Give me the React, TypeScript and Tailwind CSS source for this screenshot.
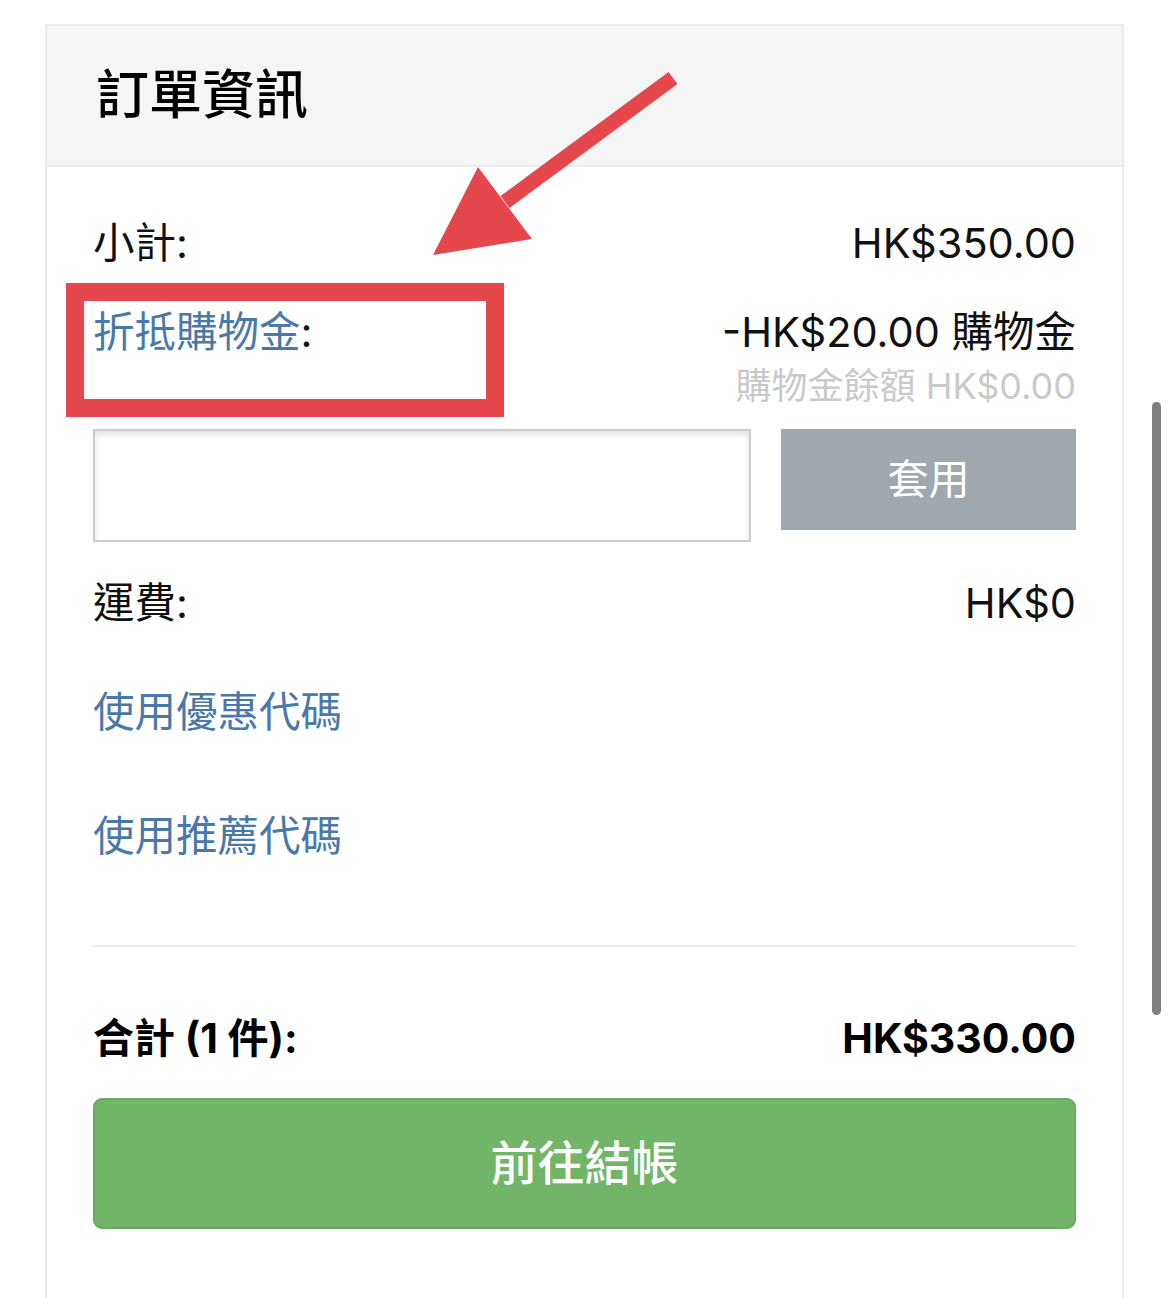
import React from 'react';

const font = { fontFamily: 'Inter, "Noto Sans CJK TC", sans-serif' };

const Row: React.FC<{ label: React.ReactNode; value: React.ReactNode; className?: string }> = ({ label, value, className }) => (
  <div className={`flex justify-between items-start ${className ?? ''}`}>
    <div className="text-[41.5px] leading-[48px] text-[#111]">{label}</div>
    <div className="text-[41.5px] leading-[48px] text-[#111] text-right">{value}</div>
  </div>
);

const App: React.FC = () => {
  return (
    <div className="relative w-[1169px] h-[1298px] bg-white overflow-hidden" style={font}>
      <div className="ml-[45px] mt-[24px] w-[1079px] h-[1274px] border-2 border-b-0 border-[#ebebeb]">
        <div className="h-[141px] bg-[#f5f5f5] border-b-2 border-[#ebebeb] flex items-center pl-[49px]">
          <h1 className="text-[53px] leading-none font-medium text-black">訂單資訊</h1>
        </div>

        <div className="px-[46px]">
          <Row className="mt-[52px]" label="小計:" value="HK$350.00" />

          <div className="flex justify-between items-start mt-[41px]">
            <div className="text-[41.5px] leading-[48px]">
              <span className="text-[#4a79a9]">折抵購物金</span>
              <span className="text-[#111]">:</span>
            </div>
            <div className="text-right">
              <div className="text-[41.5px] leading-[48px] text-[#111]">-HK$20.00 購物金</div>
              <div className="mt-[10px] text-[36px] leading-[40px] text-[#c9c9c9]">購物金餘額 HK$0.00</div>
            </div>
          </div>

          <div className="flex items-start justify-between mt-[23px]">
            <input
              className="w-[658px] h-[113px] border-2 border-[#cccccc] bg-white shadow-[inset_0_4px_6px_rgba(0,0,0,0.12)] outline-none"
              type="text"
            />
            <button className="w-[295px] h-[101px] bg-[#9ea8ae] text-white text-[41px]">套用</button>
          </div>

          <Row className="mt-[37px]" label="運費:" value="HK$0" />

          <div className="mt-[61px] text-[41.5px] leading-[48px] text-[#4a79a9]">使用優惠代碼</div>
          <div className="mt-[76px] text-[41.5px] leading-[48px] text-[#4a79a9]">使用推薦代碼</div>

          <div className="mt-[85px] h-[2px] bg-[#eeeeee]" />

          <div className="flex justify-between items-center mt-[67px] font-bold text-[41px] leading-[48px] text-black">
            <span>合計 (1 件):</span>
            <span>HK$330.00</span>
          </div>

          <button className="mt-[36px] w-full h-[131px] rounded-[9px] bg-[#72b568] border-2 border-[#69ac5f] text-white text-[47px] font-medium">
            前往結帳
          </button>
        </div>
      </div>

      {/* annotation: red box + arrow */}
      <div className="absolute left-[66px] top-[283px] w-[438px] h-[134px] border-[18px] border-[#e5474d]" />
      <svg className="absolute left-0 top-0" width="1169" height="1298" viewBox="0 0 1169 1298">
        <line x1="673" y1="78" x2="505" y2="202" stroke="#e5474d" strokeWidth="15" />
        <polygon points="433,255 478,167 532,239" fill="#e5474d" />
      </svg>

      {/* scrollbar thumb */}
      <div className="absolute left-[1152px] top-[402px] w-[9px] h-[613px] rounded-full bg-[#808080]" />
    </div>
  );
};

export default App;
